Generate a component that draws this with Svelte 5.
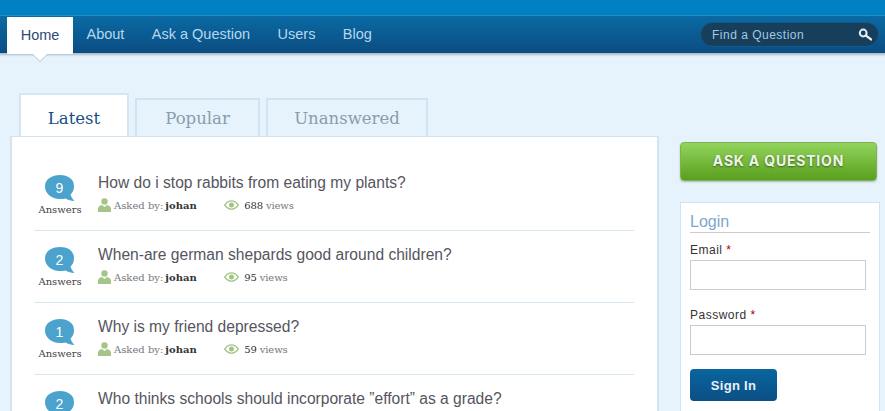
<script lang="ts">
	const questions = [
		{ count: 9, title: 'How do i stop rabbits from eating my plants?', views: '688' },
		{ count: 2, title: 'When-are german shepards good around children?', views: '95' },
		{ count: 1, title: 'Why is my friend depressed?', views: '59' },
		{ count: 2, title: 'Who thinks schools should incorporate ”effort” as a grade?', views: '40' }
	];
	const links = ['About', 'Ask a Question', 'Users', 'Blog'];
</script>

<div class="shell">
	<div class="topbar"></div>
	<nav class="nav">
		<a class="home" href="#home">Home</a>
		{#each links as link}
			<a class="link" href="#nav">{link}</a>
		{/each}
		<div class="search">
			<span>Find a Question</span>
			<svg width="14" height="13" viewBox="0 0 14 13">
				<circle cx="5.2" cy="5" r="3.4" fill="none" stroke="#e8eef2" stroke-width="2" />
				<path d="M8 7.6 L13 11.4" stroke="#e8eef2" stroke-width="2.4" stroke-linecap="round" />
			</svg>
		</div>
	</nav>

	<div class="body">
		<main class="main">
			<div class="tabs">
				<div class="tab active">Latest</div>
				<div class="tab popular">Popular</div>
				<div class="tab unanswered">Unanswered</div>
			</div>
			<div class="panel">
				{#each questions as q}
					<article class="question">
						<div class="bubble-col">
							<div class="bubble">
								<svg width="30" height="27" viewBox="0 0 30 27">
									<path d="M15 0 C23 0 29 4 29 11 C29 15 27.500 18 25.500 19.500 C26 21.500 27.500 24 29.500 26 C26 26 23 25 20.500 23.500 C18.500 24 17 24 15 24 C6 24 0 18 0 11.500 C0 4 7 0 15 0 Z" fill="#4ba3cd" />
								</svg>
								<span>{q.count}</span>
							</div>
							<div class="answers">Answers</div>
						</div>
						<div class="info">
							<h2>{q.title}</h2>
							<div class="meta">
								<svg class="user" width="13" height="14" viewBox="0 0 13 14">
									<circle cx="6.500" cy="3.500" r="3.200" fill="#a3c585" />
									<path d="M0 14 L0 11 C0 8.500 2 7.500 4 7 L6.500 9 L9 7 C11 7.500 13 8.500 13 11 L13 14 Z" fill="#a3c585" />
								</svg>
								<span class="asked">Asked by:</span>
								<b class="author">johan</b>
								<svg class="eye" width="15" height="10" viewBox="0 0 15 10">
									<path d="M0.700 5 C3 1.800 5 0.800 7.500 0.800 C10 0.800 12 1.800 14.300 5 C12 8.200 10 9.200 7.500 9.200 C5 9.200 3 8.200 0.700 5 Z" fill="none" stroke="#a3c585" stroke-width="1.300" />
									<circle cx="7.500" cy="5" r="2.500" fill="#a3c585" />
								</svg>
								<span class="views"><b>{q.views}</b> views</span>
							</div>
						</div>
					</article>
				{/each}
			</div>
		</main>

		<aside class="side">
			<a class="ask" href="#ask">ASK A QUESTION</a>
			<form class="login">
				<h3>Login</h3>
				<label for="email">Email <em>*</em></label>
				<input id="email" type="text" />
				<label class="second" for="password">Password <em>*</em></label>
				<input id="password" type="password" />
				<button type="button">Sign In</button>
			</form>
		</aside>
	</div>
</div>

<style>
	:global(body) {
		margin: 0;
		background: #e6f3fc;
		overflow: hidden;
	}

	.shell {
		width: 885px;
		height: 411px;
		overflow: hidden;
		font-family: 'Liberation Sans', Arial, sans-serif;
	}

	.topbar {
		height: 15px;
		background: #0081c4;
		border-bottom: 1px solid #2b95d3;
	}

	.nav {
		height: 37px;
		display: flex;
		align-items: flex-start;
		padding-left: 7px;
		background: linear-gradient(#0a6aa3, #0b4d82);
		box-shadow: 0 1px 2px 1px rgba(60, 80, 100, 0.35);
		position: relative;
	}

	.nav a {
		text-decoration: none;
		font-size: 14.5px;
		line-height: 37px;
	}

	.home {
		width: 66px;
		height: 37px;
		margin-top: 1px;
		text-align: center;
		background: #fff;
		color: #2d4a78;
		position: relative;
		line-height: 36px !important;
	}

	.home::after {
		content: '';
		position: absolute;
		left: 26px;
		top: 37px;
		border-left: 7px solid transparent;
		border-right: 7px solid transparent;
		border-top: 7px solid #fff;
		filter: drop-shadow(0 1px 0 #a8c6dc);
	}

	.link {
		color: #b5d8ee;
		margin-left: 13.5px;
		margin-right: 13.9px;
		height: 37px;
	}

	.search {
		margin-left: auto;
		margin-right: 6px;
		margin-top: 6px;
		width: 179px;
		height: 25px;
		box-sizing: border-box;
		border-radius: 13px;
		border: 1px solid #0f5a8e;
		background: #173f5b;
		display: flex;
		align-items: center;
		justify-content: space-between;
		padding: 0 6px 0 11px;
		color: #a3c9e2;
		font-size: 12px;
		letter-spacing: 0.5px;
	}

	.body {
		display: flex;
		padding-left: 10px;
	}

	.main {
		width: 649px;
		padding-top: 40px;
	}

	.tabs {
		display: flex;
		align-items: flex-end;
		gap: 6px;
		padding-left: 9px;
		height: 43px;
		font-family: 'DejaVu Serif', Georgia, serif;
		font-size: 16.5px;
	}

	.tab {
		box-sizing: border-box;
		height: 38px;
		text-align: center;
		border: 2px solid #d2e3f0;
		border-bottom: 0;
		color: #8b9cab;
		line-height: 38px;
	}

	.tab.active {
		width: 110px;
		height: 43px;
		line-height: 47px;
		background: #fff;
		color: #164f86;
		border-color: #d6e5f0;
	}

	.popular {
		width: 125px;
	}

	.unanswered {
		width: 162px;
	}

	.panel {
		height: 275px;
		box-sizing: border-box;
		background: #fff;
		border: 1px solid #d3e3ef;
		border-width: 1px 2px 0 2px;
		padding: 22px 23px 0 22px;
	}

	.question {
		display: flex;
		height: 71px;
		border-bottom: 1px solid #d6e6f0;
	}

	.bubble-col {
		width: 64px;
		padding-top: 16px;
		text-align: center;
		flex-shrink: 0;
	}

	.bubble {
		width: 30px;
		height: 27px;
		margin-left: 11px;
		position: relative;
		color: #fff;
		font-size: 14px;
	}

	.bubble svg {
		display: block;
	}

	.bubble span {
		position: absolute;
		left: 0;
		top: 5px;
		width: 29px;
		text-align: center;
	}

	.answers {
		width: 52px;
		margin-top: 2px;
		font-family: 'DejaVu Serif', Georgia, serif;
		font-size: 10px;
		color: #444;
	}

	.info {
		padding-top: 14px;
	}

	h2 {
		margin: 0;
		font-size: 15.6px;
		font-weight: normal;
		line-height: 20px;
		color: #555560;
	}

	.meta {
		display: flex;
		align-items: center;
		height: 16px;
		margin-top: 4px;
		font-family: 'DejaVu Serif', Georgia, serif;
		font-size: 10px;
		color: #777;
	}

	.user {
		margin-right: 3px;
	}

	.author {
		margin-left: 2px;
		color: #333;
		width: 33px;
	}

	.eye {
		margin-left: 26px;
		margin-right: 5px;
	}

	.views {
		letter-spacing: -0.15px;
	}

	.views b {
		color: #333;
		font-weight: normal;
	}

	.side {
		margin-left: 21px;
		padding-top: 89px;
		width: 197px;
		flex-shrink: 0;
	}

	.ask {
		display: block;
		height: 39px;
		box-sizing: border-box;
		border: 1px solid #7cb24f;
		border-radius: 4px;
		background: linear-gradient(#92d45c, #5a9f1e);
		box-shadow: 0 1px 2px rgba(60, 80, 60, 0.35);
		color: #eef4e6;
		text-align: center;
		text-decoration: none;
		font-family: Inter, 'Liberation Sans', sans-serif;
		font-size: 14px;
		font-weight: 700;
		letter-spacing: 0.8px;
		line-height: 35px;
		text-shadow: 0 1px 2px rgba(40, 60, 20, 0.7);
	}

	.login {
		width: 200px;
		height: 220px;
		box-sizing: border-box;
		margin-top: 21px;
		background: #fff;
		border: 1px solid #cfe3f3;
		padding: 8px 0 0 9px;
		display: flex;
		flex-direction: column;
		align-items: flex-start;
	}

	h3 {
		margin: 0;
		width: 180px;
		height: 21px;
		font-size: 16px;
		font-weight: normal;
		line-height: 21px;
		color: #7ea6cc;
		border-bottom: 1px solid #ccc;
	}

	label {
		font-size: 12px;
		line-height: 14px;
		margin-top: 10px;
		color: #333;
		letter-spacing: 0.5px;
	}

	label.second {
		margin-top: 18px;
	}

	em {
		color: #a00;
		font-style: normal;
	}

	input {
		width: 176px;
		height: 30px;
		box-sizing: border-box;
		margin: 3px 0 0;
		padding: 0;
		border: 1px solid #ccc;
		background: #fff;
		outline: none;
	}

	button {
		margin-top: 14px;
		width: 87px;
		height: 32px;
		border: 0;
		border-radius: 4px;
		background: linear-gradient(#0a659f, #0b4f84);
		color: #e8f0f6;
		font-family: 'Liberation Sans', Arial, sans-serif;
		font-size: 13px;
		font-weight: bold;
		letter-spacing: 0.3px;
	}
</style>
